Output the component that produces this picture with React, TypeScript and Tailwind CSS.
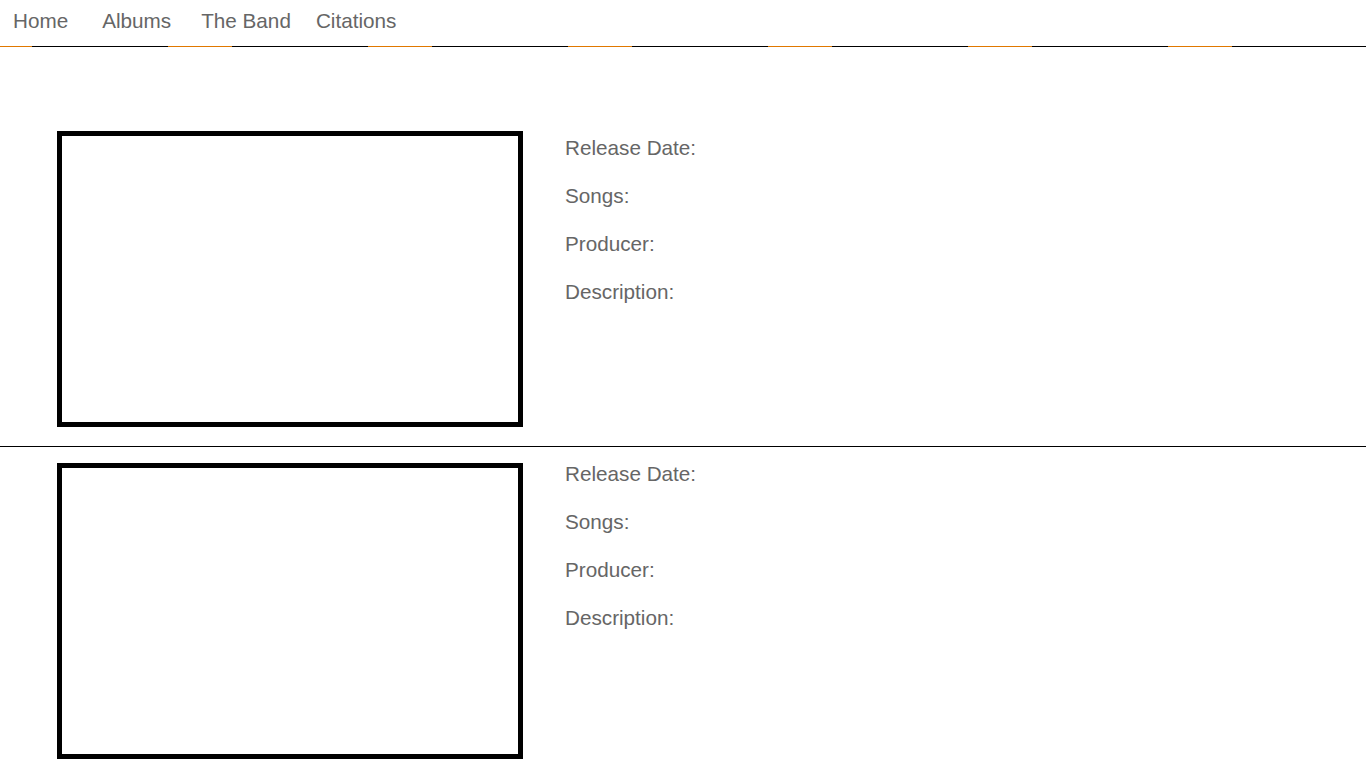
const navItems = [
  { label: 'Home', cls: 'ml-[13px]' },
  { label: 'Albums', cls: 'ml-[34px]' },
  { label: 'The Band', cls: 'ml-[30px]' },
  { label: 'Citations', cls: 'ml-[25px]' },
]

const fields = ['Release Date:', 'Songs:', 'Producer:', 'Description:']

function Album({ textOffset }: { textOffset: string }) {
  return (
    <div className="flex items-start">
      <div className="ml-[57px] w-[466px] h-[296px] border-[5px] border-black shrink-0" />
      <ul className={`ml-[42px] flex flex-col gap-6 list-none ${textOffset}`}>
        {fields.map(f => (
          <li key={f} className="text-[20.7px] leading-6 text-[#666]">{f}</li>
        ))}
      </ul>
    </div>
  )
}

export default function App() {
  return (
    <div className="min-h-screen bg-white" style={{ fontFamily: '"Liberation Sans", Arial, sans-serif' }}>

      {/* ── Nav ── */}
      <nav className="h-[46px] flex items-start pt-[9px]">
        {navItems.map(item => (
          <a key={item.label} className={`${item.cls} text-[20.7px] leading-6 text-[#666] cursor-pointer`}>
            {item.label}
          </a>
        ))}
      </nav>
      <div className="h-px w-full bg-[repeating-linear-gradient(to_right,#e07800_0px,#e07800_32px,#000_32px,#000_168px,#e07800_168px,#e07800_200px)]" />

      {/* ── Albums ── */}
      <div className="pt-[84px]">
        <Album textOffset="mt-[5px]" />
      </div>
      <div className="mt-[19px] h-px w-full bg-black" />
      <div className="pt-[16px]">
        <Album textOffset="-mt-[1px]" />
      </div>

    </div>
  )
}
